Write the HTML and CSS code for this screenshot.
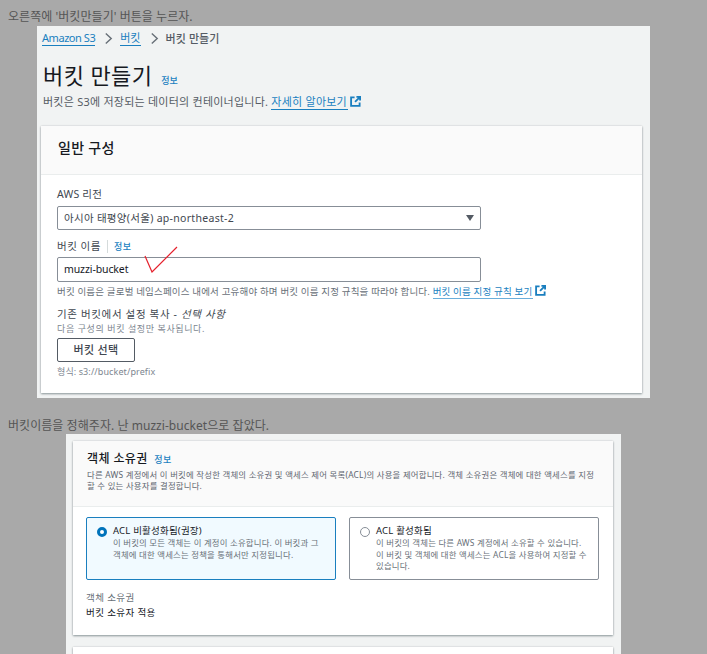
FILE: index.html
```html
<!DOCTYPE html>
<html lang="ko">
<head>
<meta charset="utf-8">
<title>버킷 만들기</title>
<link rel="stylesheet" href="styles.css">
</head>
<body>
<main class="post">
  <p class="note note-first">오른쪽에 '버킷만들기' 버튼을 누르자.</p>
  <section class="shot shot-one">
    <nav class="crumbs">
      <a class="link link-latin">Amazon S3</a>
      <svg class="chev" viewBox="0 0 10 14"><path d="M2 1.5 8 7l-6 5.5"/></svg>
      <a class="link">버킷</a>
      <svg class="chev" viewBox="0 0 10 14"><path d="M2 1.5 8 7l-6 5.5"/></svg>
      <span class="crumb-current">버킷 만들기</span>
    </nav>
    <div class="title-row">
      <h1>버킷 만들기</h1>
      <a class="info">정보</a>
    </div>
    <p class="lead">버킷은 S3에 저장되는 데이터의 컨테이너입니다. <a class="link">자세히 알아보기</a><svg class="ext" viewBox="0 0 12 12"><path d="M5 1.5H1.2v9.3h9.3V7"/><path d="M7 1h4v4M11 1 5.5 6.5"/></svg></p>
    <div class="card card-one">
      <header class="card-head"><h2>일반 구성</h2></header>
      <div class="card-body">
        <div class="field-label">AWS 리전</div>
        <div class="box select">아시아 태평양(서울) ap-northeast-2<i class="caret"></i></div>
        <div class="field-label label-two">버킷 이름<span class="sep"></span><a class="info">정보</a></div>
        <div class="input-wrap">
          <div class="box">muzzi-bucket</div>
          <svg class="check" viewBox="0 0 36 28"><path d="M1 11 8 27 33 2"/></svg>
        </div>
        <p class="hint">버킷 이름은 글로벌 네임스페이스 내에서 고유해야 하며 버킷 이름 지정 규칙을 따라야 합니다. <a class="link">버킷 이름 지정 규칙 보기</a><svg class="ext" viewBox="0 0 12 12"><path d="M5 1.5H1.2v9.3h9.3V7"/><path d="M7 1h4v4M11 1 5.5 6.5"/></svg></p>
        <div class="field-label label-three">기존 버킷에서 설정 복사 - <em>선택 사항</em></div>
        <p class="sub sub-kr">다음 구성의 버킷 설정만 복사됩니다.</p>
        <button class="btn" type="button">버킷 선택</button>
        <p class="sub format">형식: s3://bucket/prefix</p>
      </div>
    </div>
  </section>
  <p class="note note-second">버킷이름을 정해주자. 난 muzzi-bucket으로 잡았다.</p>
  <section class="shot shot-two">
    <div class="card card-two">
      <header class="card-head head-two">
        <h3>객체 소유권 <a class="info">정보</a></h3>
        <p>다른 AWS 계정에서 이 버킷에 작성한 객체의 소유권 및 액세스 제어 목록(ACL)의 사용을 제어합니다. 객체 소유권은 객체에 대한 액세스를 지정할 수 있는 사용자를 결정합니다.</p>
      </header>
      <div class="body-two">
        <div class="options">
          <div class="option selected">
            <span class="radio on"></span>
            <div><strong>ACL 비활성화됨(권장)</strong><p>이 버킷의 모든 객체는 이 계정이 소유합니다. 이 버킷과 그 객체에 대한 액세스는 정책을 통해서만 지정됩니다.</p></div>
          </div>
          <div class="option">
            <span class="radio"></span>
            <div><strong>ACL 활성화됨</strong><p>이 버킷의 객체는 다른 AWS 계정에서 소유할 수 있습니다. 이 버킷 및 객체에 대한 액세스는 ACL을 사용하여 지정할 수 있습니다.</p></div>
          </div>
        </div>
        <div class="owner-label">객체 소유권</div>
        <div class="owner-value">버킷 소유자 적용</div>
      </div>
    </div>
    <div class="card card-next"></div>
  </section>
</main>
</body>
</html>
```
FILE: styles.css
```css
* { box-sizing: border-box; }
html, body { margin: 0; height: 654px; overflow: hidden; }
body {
  background: #a9a9a9;
  color: #16191f;
  font-family: "Noto Sans", "Noto Sans CJK KR", sans-serif;
}
p, h1, h2, h3 { margin: 0; }
.post { display: flex; flex-direction: column; height: 654px; overflow: hidden; }
.note { font-size: 12px; color: #555; margin: 0 0 0 8px; letter-spacing: .05px; }
.note-first { margin-top: 8px; height: 18px; line-height: 18px; }
.note-second { margin-top: 20px; height: 15px; line-height: 16px; }
.shot { background: #f1f3f3; flex: none; }
.shot-one { margin-left: 37px; width: 613px; height: 372px; padding-top: 4px; }
.shot-two { margin-left: 66px; width: 555px; height: 220px; padding: 7px 8px 0 7px; margin-top: 1px; }
.link { color: #1a7fbf; border-bottom: 1px solid #1a7fbf; padding-right: 1px; }
.crumbs { display: flex; align-items: center; gap: 7px; margin-left: 5px; font-size: 11px; line-height: 17px; color: #555b64; }
.crumbs .link { line-height: 14px; padding-right: 0; }
.crumb-current { font-weight: 500; letter-spacing: .1px; }
.link-latin { letter-spacing: -.45px; }
.chev { width: 9px; height: 13px; fill: none; stroke: #687078; stroke-width: 1.6; margin-left: 2px; }
.title-row { display: flex; align-items: baseline; gap: 9px; margin: 12px 0 0 6px; }
h1 { font-size: 22px; line-height: 33px; font-weight: 400; letter-spacing: .4px; color: #16191f; }
.info { color: #1a7fbf; font-size: 9px; font-weight: 500; }
.lead { margin: 1px 0 0 6px; font-size: 11px; line-height: 18px; color: #555b64; letter-spacing: .24px; }
.ext { width: 11px; height: 11px; fill: none; stroke: #1a7fbf; stroke-width: 2; vertical-align: -1px; margin-left: 2px; }
.card { background: #fff; box-shadow: 0 1px 2px rgba(0,28,36,.4), 0 0 2px rgba(0,28,36,.12); }
.card-one { width: 601px; height: 267px; margin: 15px 0 0 4px; }
.card-head { background: #fafafa; border-bottom: 1px solid #eaeded; }
.card-one .card-head { height: 49px; padding: 11px 17px; }
h2 { font-size: 14px; line-height: 22px; font-weight: 500; letter-spacing: .3px; }
.card-body { padding: 12px 16px 0; }
.field-label { font-size: 10.5px; line-height: 15px; color: #414750; display: flex; align-items: center; letter-spacing: .2px; }
.box { position: relative; height: 24px; width: 424px; border: 1px solid #878e97; border-radius: 2px; background: #fff; font-size: 10.5px; line-height: 22px; padding-left: 6px; color: #16191f; letter-spacing: -.1px; }
.select { margin-top: 4px; color: #414750; letter-spacing: .3px; }
.caret { position: absolute; right: 6px; top: 8px; border: 4px solid transparent; border-top: 6px solid #545b64; border-bottom: 0; }
.label-two { margin-top: 9px; letter-spacing: .5px; }
.sep { width: 1px; height: 13px; background: #d5dbdb; margin: 0 6px; }
.input-wrap { position: relative; margin-top: 3px; }
.input-wrap .box { height: 25px; }
.check { position: absolute; left: 87px; top: -12px; width: 36px; height: 28px; fill: none; stroke: #e5202c; stroke-width: 1.2; }
.hint { margin-top: 3px; font-size: 9.5px; line-height: 14px; color: #687078; letter-spacing: .17px; white-space: nowrap; }
.hint .link { border-bottom-color: #6aaedb; }
.label-three { margin-top: 8px; line-height: 14px; display: block; letter-spacing: .65px; }
.sub { font-size: 9px; line-height: 14px; color: #7d8690; }
.sub-kr { margin-top: 1px; letter-spacing: .6px; }
.btn { display: block; margin-top: 2px; width: 78px; height: 24px; border: 1px solid #545b64; border-radius: 2px; background: #fff; color: #414750; font: 500 11px/20px "Noto Sans", "Noto Sans CJK KR", sans-serif; letter-spacing: .3px; padding: 0; }
.format { margin-top: 3px; letter-spacing: .1px; }
.card-two { height: 194px; }
.head-two { height: 66px; padding: 9px 14px 0; }
h3 { font-size: 12px; line-height: 18px; font-weight: 500; letter-spacing: .4px; }
h3 .info { margin-left: 3px; }
.head-two p { font-size: 8.4px; line-height: 11px; color: #5f6670; letter-spacing: .22px; }
.body-two { padding: 10px 14px 0 13px; }
.options { display: flex; gap: 13px; }
.option { flex: 1; display: flex; gap: 6px; height: 63px; border: 1px solid #878e97; border-radius: 2px; padding: 6px 10px; }
.option.selected { background: #f1faff; border-color: #1a7fbf; }
.radio { flex: none; width: 10px; height: 10px; margin-top: 3px; border-radius: 50%; border: 1px solid #878e97; background: #fff; }
.radio.on { border: 3px solid #0073bb; }
.option strong { display: block; font-size: 9.5px; line-height: 13px; font-weight: 400; color: #16191f; letter-spacing: .2px; }
.option p { font-size: 8.4px; line-height: 11.7px; color: #687078; letter-spacing: .2px; }
.owner-label { margin-top: 11px; font-size: 9.5px; line-height: 14px; color: #687078; letter-spacing: .4px; }
.owner-value { margin-top: 1px; font-size: 9.5px; line-height: 14px; color: #16191f; letter-spacing: .4px; }
.card-next { height: 20px; margin-top: 12px; }
```
